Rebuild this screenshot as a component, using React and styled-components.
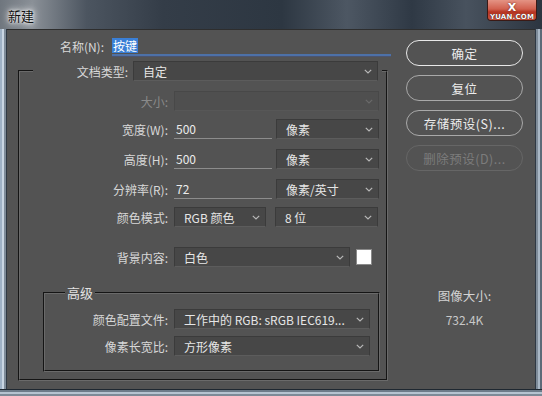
import React from "react";
import styled, { createGlobalStyle } from "styled-components";

const GlobalStyle = createGlobalStyle`
  html, body {
    margin: 0;
    padding: 0;
    background: #27303a;
  }
  body {
    font-family: "Noto Sans CJK SC", "Noto Sans", sans-serif;
    font-size: 12px;
  }
`;

const Window = styled.div`
  width: 542px;
  height: 396px;
  display: flex;
  flex-direction: column;
  overflow: hidden;
  background: #3b4653;
`;

const TitleBar = styled.div`
  height: 29px;
  display: flex;
  justify-content: space-between;
  align-items: flex-start;
  background: linear-gradient(
    90deg,
    #6f767e 0%,
    #8a9097 6%,
    #4c5560 16%,
    #343d48 30%,
    #2d3742 52%,
    #4d5763 64%,
    #2f3945 76%,
    #48525e 86%,
    #2c3540 100%
  );
`;

const Title = styled.div`
  padding: 6px 0 0 8px;
  font-size: 13px;
  color: #111;
  text-shadow: 0 0 6px #fff, 0 0 3px #fff, 0 0 10px rgba(255, 255, 255, 0.8);
`;

const CloseButton = styled.div`
  width: 48px;
  height: 20px;
  margin-right: 5px;
  display: flex;
  flex-direction: column;
  align-items: center;
  border: 1px solid #3a1a16;
  border-top: none;
  border-radius: 0 0 4px 4px;
  background: linear-gradient(180deg, #e49384 0%, #d2614f 45%, #b63422 60%, #c9543f 100%);
  color: #fff;
  line-height: 1;
`;

const CloseX = styled.span`
  font-family: "DejaVu Sans", sans-serif;
  font-weight: 700;
  font-size: 11px;
  margin-top: 2px;
  text-shadow: 0 0 2px #5a1a10;
`;

const Watermark = styled.span`
  font-family: "DejaVu Sans", sans-serif;
  font-size: 7px;
  font-weight: 700;
  letter-spacing: 0.2px;
  margin-top: 1px;
  color: #fafafa;
  text-shadow: 0 0 1px #000;
`;

const Body = styled.div`
  flex: 1;
  display: flex;
`;

const SideFrame = styled.div`
  width: 7px;
  background: ${(p) =>
    p.$left
      ? "linear-gradient(90deg, #9fb2c6 0 2px, #c9d6e3 2px 4px, #7f8c99 4px 6px, #2f3944 6px)"
      : "linear-gradient(90deg, #2f3944 0 1px, #7f8c99 1px 3px, #a9b7c5 3px 5px, #5d6a78 5px)"};
`;

const BottomFrame = styled.div`
  height: 7px;
  background: linear-gradient(180deg, #1f2831 0 1px, #6d7b89 1px 3px, #b6c3d0 3px 5px, #7d8a97 5px);
`;

const Client = styled.div`
  flex: 1;
  display: flex;
  background: #535353;
  border-top: 1px solid #2e2e2e;
  color: #dcdcdc;
`;

const FormCol = styled.div`
  width: 384px;
  display: flex;
  flex-direction: column;
`;

const NameRow = styled.div`
  display: flex;
  align-items: center;
  height: 20px;
  margin-top: 6px;
  gap: 8px;
`;

const Label = styled.div`
  width: ${(p) => p.$w}px;
  flex: none;
  text-align: right;
  white-space: nowrap;
  color: ${(p) => (p.$disabled ? "#8a8a8a" : "#d8d8d8")};
`;

const NameInput = styled.div`
  flex: 1;
  height: 18px;
  display: flex;
  align-items: center;
  border-bottom: 2px solid #4d71a8;
  box-shadow: 0 1px 0 #4b5470;
`;

const Selected = styled.span`
  background: #3a7fd6;
  color: #fff;
  padding: 0 1px;
  line-height: 15px;
`;

const Group = styled.fieldset`
  margin: ${(p) => p.$margin};
  width: ${(p) => p.$w}px;
  box-sizing: border-box;
  padding: 0 0 ${(p) => p.$pb}px 0;
  border: 2px groove #6a6a6a;
  min-width: 0;
`;

const Legend = styled.legend`
  margin-left: ${(p) => p.$ml}px;
  padding: 0 ${(p) => p.$pr}px 0 ${(p) => p.$pl}px;
  display: flex;
  align-items: center;
  gap: 5px;
  color: #e2e2e2;
  font-size: ${(p) => (p.$big ? 13 : 12)}px;
`;

const Row = styled.div`
  display: flex;
  align-items: center;
  height: 20px;
  margin-top: ${(p) => p.$mt}px;
  gap: 6px;
`;

const Fields = styled.div`
  display: flex;
  align-items: center;
  gap: ${(p) => p.$gap}px;
`;

const Select = styled.div`
  width: ${(p) => p.$w}px;
  height: 20px;
  box-sizing: border-box;
  display: flex;
  align-items: center;
  justify-content: space-between;
  padding: 0 5px 0 9px;
  background: ${(p) => (p.$disabled ? "#4f4f4f" : "#474747")};
  border: 1px solid ${(p) => (p.$disabled ? "#484848" : "#3b3b3b")};
  border-bottom-color: ${(p) => (p.$disabled ? "#575757" : "#5c5c5c")};
  color: #e6e6e6;
  white-space: nowrap;
  overflow: hidden;
`;

const TextInput = styled.div`
  width: ${(p) => p.$w}px;
  height: 19px;
  box-sizing: border-box;
  padding: 0 2px;
  display: flex;
  align-items: center;
  border-bottom: 1px solid #8c8c8c;
  color: #ececec;
`;

const Swatch = styled.div`
  width: 14px;
  height: 14px;
  background: #fff;
  border: 1px solid #8a8a8a;
  margin-left: 5px;
`;

const SideCol = styled.div`
  width: 117px;
  margin-left: 15px;
  padding-top: 10px;
  display: flex;
  flex-direction: column;
  align-items: center;
  gap: 9px;
`;

const Button = styled.div`
  width: 117px;
  height: 26px;
  box-sizing: border-box;
  display: flex;
  align-items: center;
  justify-content: center;
  border-radius: 13px;
  border: ${(p) => (p.$primary ? "1.5px solid #e8e8e8" : p.$disabled ? "1px solid #666" : "1px solid #a9a9a9")};
  color: ${(p) => (p.$disabled ? "#7c7c7c" : "#ececec")};
  font-size: 12.5px;
  letter-spacing: 0.5px;
`;

const SizeInfo = styled.div`
  margin-top: 108px;
  display: flex;
  flex-direction: column;
  align-items: center;
  gap: 8px;
  line-height: 16px;
`;

const SizeLabel = styled.div`
  color: #d4d4d4;
  font-size: 12.5px;
`;

const SizeValue = styled.div`
  color: #c8c8c8;
`;

function Chevron({ dim }) {
  return (
    <svg width="8" height="5" viewBox="0 0 8 5" style={{ flex: "none" }}>
      <polyline
        points="0.8,0.8 4,4 7.2,0.8"
        fill="none"
        stroke={dim ? "#6a6a6a" : "#b8b8b8"}
        strokeWidth="1.2"
      />
    </svg>
  );
}

function Dropdown({ w, value, disabled }) {
  return (
    <Select $w={w} $disabled={disabled}>
      <span>{value}</span>
      <Chevron dim={disabled} />
    </Select>
  );
}

export default function App() {
  return (
    <>
      <GlobalStyle />
      <Window>
        <TitleBar>
          <Title>新建</Title>
          <CloseButton>
            <CloseX>X</CloseX>
            <Watermark>YUAN.COM</Watermark>
          </CloseButton>
        </TitleBar>
        <Body>
          <SideFrame $left />
          <Client>
            <FormCol>
              <NameRow>
                <Label $w={97}>名称(N):</Label>
                <NameInput>
                  <Selected>按键</Selected>
                </NameInput>
              </NameRow>

              <Group $margin="5px 0 0 11px" $w={370} $pb={7}>
                <Legend $ml={13} $pl={0} $pr={4}>
                  <Label $w={95}>文档类型:</Label>
                  <Dropdown w={245} value="自定" />
                </Legend>

                <Row $mt={10}>
                  <Label $w={148} $disabled>
                    大小:
                  </Label>
                  <Dropdown w={205} value="" disabled />
                </Row>

                <Row $mt={8}>
                  <Label $w={148}>宽度(W):</Label>
                  <Fields $gap={4}>
                    <TextInput $w={98}>500</TextInput>
                    <Dropdown w={103} value="像素" />
                  </Fields>
                </Row>

                <Row $mt={10}>
                  <Label $w={148}>高度(H):</Label>
                  <Fields $gap={4}>
                    <TextInput $w={98}>500</TextInput>
                    <Dropdown w={103} value="像素" />
                  </Fields>
                </Row>

                <Row $mt={10}>
                  <Label $w={148}>分辨率(R):</Label>
                  <Fields $gap={4}>
                    <TextInput $w={98}>72</TextInput>
                    <Dropdown w={103} value="像素/英寸" />
                  </Fields>
                </Row>

                <Row $mt={8}>
                  <Label $w={148}>颜色模式:</Label>
                  <Fields $gap={9}>
                    <Dropdown w={92} value="RGB 颜色" />
                    <Dropdown w={103} value="8 位" />
                  </Fields>
                </Row>

                <Row $mt={20}>
                  <Label $w={148}>背景内容:</Label>
                  <Fields $gap={1}>
                    <Dropdown w={176} value="白色" />
                    <Swatch />
                  </Fields>
                </Row>

                <Group $margin="16px 0 0 23px" $w={337} $pb={14}>
                  <Legend $ml={20} $pl={2} $pr={2} $big>
                    高级
                  </Legend>
                  <Row $mt={7}>
                    <Label $w={123}>颜色配置文件:</Label>
                    <Dropdown w={196} value="工作中的 RGB: sRGB IEC619..." />
                  </Row>
                  <Row $mt={7}>
                    <Label $w={123}>像素长宽比:</Label>
                    <Dropdown w={196} value="方形像素" />
                  </Row>
                </Group>
              </Group>
            </FormCol>

            <SideCol>
              <Button $primary>确定</Button>
              <Button>复位</Button>
              <Button>存储预设(S)...</Button>
              <Button $disabled>删除预设(D)...</Button>
              <SizeInfo>
                <SizeLabel>图像大小:</SizeLabel>
                <SizeValue>732.4K</SizeValue>
              </SizeInfo>
            </SideCol>
          </Client>
          <SideFrame />
        </Body>
        <BottomFrame />
      </Window>
    </>
  );
}
